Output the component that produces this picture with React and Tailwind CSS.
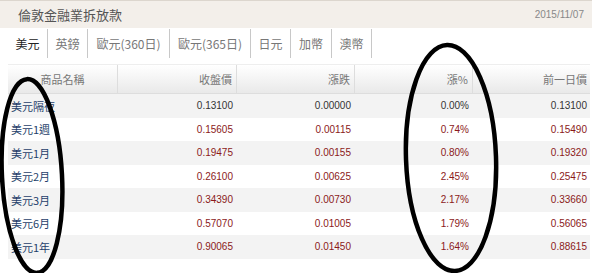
import React from 'react';

const tabs = [
  { label: '美元', w: 'w-[40px]', active: true },
  { label: '英鎊', w: 'w-[40px]' },
  { label: '歐元(360日)', w: 'w-[82px]' },
  { label: '歐元(365日)', w: 'w-[81px]' },
  { label: '日元', w: 'w-[40px]' },
  { label: '加幣', w: 'w-[41px]' },
  { label: '澳幣', w: 'w-[40px]' },
];

const rows = [
  ['美元隔夜', '0.13100', '0.00000', '0.00%', '0.13100', false],
  ['美元1週', '0.15605', '0.00115', '0.74%', '0.15490', true],
  ['美元1月', '0.19475', '0.00155', '0.80%', '0.19320', true],
  ['美元2月', '0.26100', '0.00625', '2.45%', '0.25475', true],
  ['美元3月', '0.34390', '0.00730', '2.17%', '0.33660', true],
  ['美元6月', '0.57070', '0.01005', '1.79%', '0.56065', true],
  ['美元1年', '0.90065', '0.01450', '1.64%', '0.88615', true],
];

const cjk = "font-['Noto_Sans_CJK_TC','Noto_Sans_CJK_SC',sans-serif]";
const num = "font-['Liberation_Sans','Noto_Sans_CJK_TC',sans-serif]";

const App = () => {
  return (
    <div className="relative w-[600px] h-[273px] overflow-hidden bg-white">
      {/* Title bar */}
      <div className="mr-[8px] h-[28px] border-t border-[#dcd6ce] bg-[#f3efea] flex items-center justify-between">
        <span className={`pl-[18px] text-[13px] text-[#555] ${cjk}`}>倫敦金融業拆放款</span>
        <span className={`pr-[8px] text-[10px] text-[#888] ${num}`}>2015/11/07</span>
      </div>

      {/* Tabs */}
      <div className="ml-[8px] mt-[1px] h-[29px] flex">
        {tabs.map(tab => (
          <div
            key={tab.label}
            className={`${tab.w} h-full flex items-center justify-center border-r border-[#c8c8c8] text-[12px] ${cjk} ${tab.active ? 'text-[#222]' : 'text-[#777]'}`}
          >
            {tab.label}
          </div>
        ))}
      </div>

      {/* Table */}
      <div className="ml-[8px] mt-[6px] w-[582px]">
        <div className={`h-[30px] flex items-center border-t border-[#eee] border-b border-b-[#ddd] bg-gradient-to-b from-white to-[#e9e9e9] text-[11px] text-[#777] ${cjk}`}>
          <div className="w-[110px] h-full flex items-center justify-center border-r border-[#ddd]">商品名稱</div>
          <div className="w-[119px] h-full flex items-center justify-end pr-[4px] border-r border-[#ddd]">收盤價</div>
          <div className="w-[118px] h-full flex items-center justify-end pr-[4px] border-r border-[#ddd]">漲跌</div>
          <div className="w-[118px] h-full flex items-center justify-end pr-[4px] border-r border-[#ddd]">漲%</div>
          <div className="w-[117px] h-full flex items-center justify-end pr-[3px]">前一日價</div>
        </div>
        {rows.map(([name, close, chg, pct, prev, up], i) => (
          <div
            key={name}
            className={`h-[23.5px] flex items-center ${i % 2 === 0 ? 'bg-[#f3f3f3]' : 'bg-white'} text-[10px] ${num} ${up ? 'text-[#8b1a1a]' : 'text-[#333]'}`}
          >
            <div className={`w-[110px] pl-[3px] text-[11px] text-[#1f3f6b] ${cjk}`}>{name}</div>
            <div className="w-[119px] text-right pr-[4px]">{close}</div>
            <div className="w-[118px] text-right pr-[4px]">{chg}</div>
            <div className="w-[118px] text-right pr-[4px]">{pct}</div>
            <div className="w-[117px] text-right pr-[3px]">{prev}</div>
          </div>
        ))}
      </div>

      {/* Hand-drawn annotations */}
      <svg className="absolute inset-0 pointer-events-none" width="600" height="273" viewBox="0 0 600 273">
        <ellipse cx="32" cy="176" rx="30" ry="97" fill="none" stroke="#000" strokeWidth="4.5" transform="rotate(-3 32 176)" />
        <ellipse cx="451" cy="158" rx="45" ry="113" fill="none" stroke="#000" strokeWidth="4.5" transform="rotate(-2 451 158)" />
      </svg>
    </div>
  );
};

export default App;
